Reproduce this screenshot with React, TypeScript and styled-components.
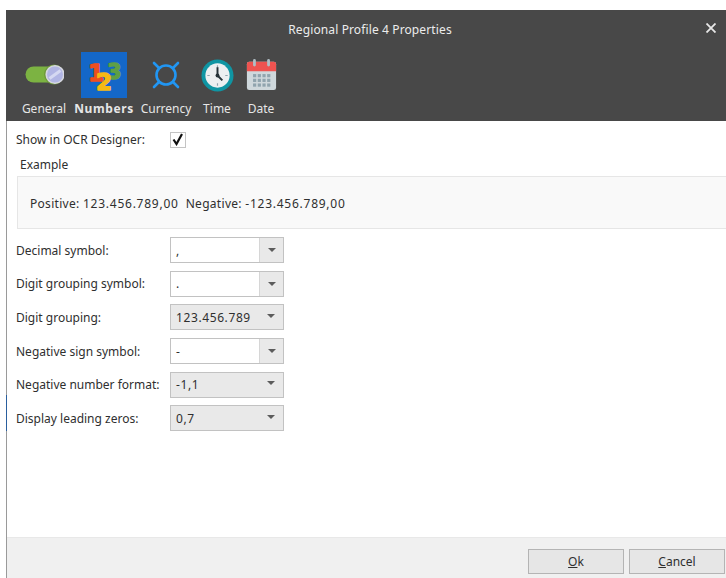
import React from "react";
import styled, { createGlobalStyle } from "styled-components";

const GlobalStyle = createGlobalStyle`
  html, body {
    margin: 0;
    padding: 0;
    background: #fff;
    overflow: hidden;
  }
  body {
    font-family: "Noto Sans", "Open Sans", sans-serif;
    font-size: 12px;
    color: #2f2f2f;
  }
`;

const TOOL_TABS = [
  { key: "general", label: "General", width: 60 },
  { key: "numbers", label: "Numbers", width: 60 },
  { key: "currency", label: "Currency", width: 64 },
  { key: "time", label: "Time", width: 38 },
  { key: "date", label: "Date", width: 50 },
];

const FIELDS = [
  { label: "Decimal symbol:", value: ",", editable: true },
  { label: "Digit grouping symbol:", value: ".", editable: true },
  { label: "Digit grouping:", value: "123.456.789", editable: false },
  { label: "Negative sign symbol:", value: "-", editable: true },
  { label: "Negative number format:", value: "-1,1", editable: false },
  { label: "Display leading zeros:", value: "0,7", editable: false },
];

// toolbar icons
const GeneralIcon = () => (
  <svg width="40" height="22" viewBox="0 0 40 22">
    <rect x="1.5" y="2.5" width="37" height="16" rx="8" fill="#7cb342" />
    <circle cx="30" cy="10.5" r="10" fill="#6f9a3c" />
    <circle cx="31" cy="10.5" r="8.8" fill="#b1b5e4" stroke="#d6d7e0" strokeWidth="1.6" />
    <path d="M25.5 14.5 L36.5 6.5" stroke="#d5d8f2" strokeWidth="3" />
  </svg>
);

const NumbersIcon = () => (
  <svg width="46" height="46" viewBox="0 0 46 46">
    <g fontFamily="'DejaVu Sans', sans-serif" fontWeight="700" strokeWidth="1.4" strokeLinejoin="round">
      <text x="7" y="29" fontSize="23" fill="#ef4e1e" stroke="#ef4e1e">1</text>
      <text x="26" y="27" fontSize="21" fill="#5e9f45" stroke="#5e9f45">3</text>
      <text x="15" y="38" fontSize="23" fill="#f5b914" stroke="#f5b914">2</text>
    </g>
  </svg>
);

const CurrencyIcon = () => (
  <svg width="30" height="30" viewBox="0 0 30 30" fill="none" stroke="#2196f3" strokeWidth="2.6" strokeLinecap="round">
    <circle cx="15" cy="15" r="9.5" />
    <path d="M8 8 L3 3 M22 8 L27 3 M8 22 L3 27 M22 22 L27 27" />
  </svg>
);

const TimeIcon = () => (
  <svg width="33" height="33" viewBox="0 0 34 34">
    <circle cx="17" cy="17" r="16.5" fill="#0f95a3" />
    <circle cx="17" cy="17" r="12.5" fill="#eceff1" />
    <path d="M17 6.5 V9 M17 25 V27.5 M6.5 17 H9 M25 17 H27.5" stroke="#90a4ae" strokeWidth="1.2" />
    <path d="M17 8.5 V17 L22 22" stroke="#263238" strokeWidth="2" fill="none" />
    <circle cx="17" cy="17" r="2" fill="#263238" />
  </svg>
);

const DateIcon = () => (
  <svg width="31" height="32" viewBox="0 0 32 34">
    <rect x="0.5" y="3" width="31" height="30" rx="2.5" fill="#cfd8dc" />
    <path d="M0.5 13 V5.5 A2.5 2.5 0 0 1 3 3 H29 A2.5 2.5 0 0 1 31.5 5.5 V13 Z" fill="#ef5350" />
    <rect x="7" y="0" width="3" height="8" rx="1.5" fill="#b0bec5" />
    <rect x="22" y="0" width="3" height="8" rx="1.5" fill="#b0bec5" />
    {[7, 12, 17, 22].map((x) =>
      [16, 21, 26].map((y) => <rect key={`${x}-${y}`} x={x} y={y} width="3.4" height="3.4" fill="#90a4ae" />)
    )}
  </svg>
);

const ICONS: Record<string, React.ReactNode> = {
  general: <GeneralIcon />,
  numbers: <NumbersIcon />,
  currency: <CurrencyIcon />,
  time: <TimeIcon />,
  date: <DateIcon />,
};

function App() {
  return (
    <Page>
      <GlobalStyle />
      <Window>
        <Header>
          <TitleBar>
            <Title>Regional Profile 4 Properties</Title>
            <CloseButton>
              <svg width="10" height="10" viewBox="0 0 10 10" stroke="#e8e8e8" strokeWidth="1.8">
                <path d="M0.5 0.5 L9.5 9.5 M9.5 0.5 L0.5 9.5" />
              </svg>
            </CloseButton>
          </TitleBar>
          <Tabs>
            {TOOL_TABS.map((tab) => (
              <Tab key={tab.key} $width={tab.width}>
                <TabIcon $active={tab.key === "numbers"}>{ICONS[tab.key]}</TabIcon>
                <TabLabel $active={tab.key === "numbers"}>{tab.label}</TabLabel>
              </Tab>
            ))}
          </Tabs>
        </Header>

        <Body>
          <CheckRow>
            <FieldLabel>Show in OCR Designer:</FieldLabel>
            <CheckBox>
              <svg width="12" height="13" viewBox="0 0 12 13" fill="none" stroke="#111" strokeWidth="2.2">
                <path d="M1.5 6.5 L4.5 11 L10 1" />
              </svg>
            </CheckBox>
          </CheckRow>

          <ExampleTitle>Example</ExampleTitle>
          <ExampleBox>
            <span>
              Positive: <Amount>123.456.789,00</Amount>
            </span>
            <span>
              Negative: <Amount>-123.456.789,00</Amount>
            </span>
          </ExampleBox>

          <Fields>
            {FIELDS.map((field) => (
              <FieldRow key={field.label}>
                <FieldLabel>{field.label}</FieldLabel>
                <Combo $editable={field.editable}>
                  <ComboValue>{field.value}</ComboValue>
                  <ComboArrow $editable={field.editable}>
                    <Arrow />
                  </ComboArrow>
                </Combo>
              </FieldRow>
            ))}
          </Fields>
        </Body>

        <Footer>
          <DialogButton>
            <u>O</u>k
          </DialogButton>
          <DialogButton>
            <u>C</u>ancel
          </DialogButton>
        </Footer>
      </Window>
    </Page>
  );
}

// css styles
const Page = styled.div`
  width: 726px;
  height: 578px;
  padding: 10px 0 0 6px;
  box-sizing: border-box;
`;

const Window = styled.div`
  position: relative;
  height: 568px;
  display: flex;
  flex-direction: column;
  border-left: 1px solid #9a9a9a;
  box-sizing: border-box;

  &::after {
    content: "";
    position: absolute;
    left: -1px;
    top: 385px;
    width: 1px;
    height: 36px;
    background: #2a5f9e;
  }
`;

const Header = styled.div`
  height: 111px;
  margin-left: -1px;
  background: #484848;
  display: flex;
  flex-direction: column;
  flex-shrink: 0;
`;

const TitleBar = styled.div`
  position: relative;
  height: 42px;
  display: flex;
  align-items: center;
  justify-content: center;
  padding-bottom: 4px;
  padding-left: 8px;
  box-sizing: border-box;
`;

const Title = styled.div`
  color: #ececec;
  font-size: 12px;
  letter-spacing: 0.12px;
`;

const CloseButton = styled.div`
  position: absolute;
  right: 10px;
  top: 13px;
  width: 10px;
  height: 10px;
  display: flex;
`;

const Tabs = styled.div`
  display: flex;
  padding-left: 8px;
`;

const Tab = styled.div<{ $width: number }>`
  width: ${(props) => props.$width}px;
  display: flex;
  flex-direction: column;
  align-items: center;
`;

const TabIcon = styled.div<{ $active?: boolean }>`
  width: ${(props) => (props.$active ? "46px" : "100%")};
  height: 46px;
  display: flex;
  align-items: center;
  justify-content: center;
  background: ${(props) => (props.$active ? "#1467c8" : "transparent")};
`;

const TabLabel = styled.div<{ $active?: boolean }>`
  margin-top: 3px;
  color: #e6e6e6;
  font-size: 12px;
  line-height: 16px;
  white-space: nowrap;
  font-weight: ${(props) => (props.$active ? 700 : 400)};
  letter-spacing: ${(props) => (props.$active ? "0.6px" : "0")};
`;

const Body = styled.div`
  flex: 1;
  display: flex;
  flex-direction: column;
  background: #fff;
  padding: 10px 0 0 9px;
`;

const CheckRow = styled.div`
  display: flex;
  align-items: center;
  height: 17px;
`;

const FieldLabel = styled.div`
  width: 154px;
  font-size: 12px;
  white-space: nowrap;
  flex-shrink: 0;
`;

const CheckBox = styled.div`
  width: 16px;
  height: 16px;
  box-sizing: border-box;
  border: 1px solid #c4c4c4;
  display: flex;
  align-items: center;
  justify-content: center;
`;

const ExampleTitle = styled.div`
  margin: 9px 0 3px 4px;
  line-height: 16px;
`;

const ExampleBox = styled.div`
  height: 53px;
  margin-left: 1px;
  box-sizing: border-box;
  display: flex;
  align-items: center;
  gap: 7px;
  padding: 2px 0 0 12px;
  background: #f9f9f9;
  border: 1px solid #e6e6e6;
  border-right: none;
  letter-spacing: 0.3px;
`;

const Amount = styled.span`
  letter-spacing: 0.75px;
`;

const Fields = styled.div`
  display: flex;
  flex-direction: column;
  gap: 7.7px;
  margin-top: 8px;
`;

const FieldRow = styled.div`
  display: flex;
  align-items: center;
  height: 26px;
`;

const Combo = styled.div<{ $editable: boolean }>`
  width: 114px;
  height: 26px;
  box-sizing: border-box;
  display: flex;
  border: 1px solid #c2c2c2;
  background: ${(props) => (props.$editable ? "#fff" : "#e9e9e9")};
`;

const ComboValue = styled.div`
  flex: 1;
  display: flex;
  align-items: center;
  padding-left: 5px;
  letter-spacing: 0.6px;
`;

const ComboArrow = styled.div<{ $editable: boolean }>`
  width: 24px;
  display: flex;
  align-items: center;
  justify-content: center;
  padding-bottom: ${(props) => (props.$editable ? "0" : "3px")};
  background: #e9e9e9;
  border-left: ${(props) => (props.$editable ? "1px solid #d6d6d6" : "none")};
  box-sizing: border-box;
`;

const Arrow = styled.div`
  width: 0;
  height: 0;
  border-left: 4px solid transparent;
  border-right: 4px solid transparent;
  border-top: 4px solid #5c5c5c;
`;

const Footer = styled.div`
  height: 41px;
  flex-shrink: 0;
  display: flex;
  justify-content: flex-end;
  align-items: flex-start;
  gap: 5px;
  padding: 11px 1px 0 0;
  box-sizing: border-box;
  background: #f0f0f0;
  border-top: 1px solid #e8e8e8;
`;

const DialogButton = styled.div`
  width: 96px;
  height: 25px;
  box-sizing: border-box;
  display: flex;
  align-items: center;
  justify-content: center;
  background: #e6e6e6;
  border: 1px solid #b4b4b4;
  font-size: 12px;
`;

export default App;
